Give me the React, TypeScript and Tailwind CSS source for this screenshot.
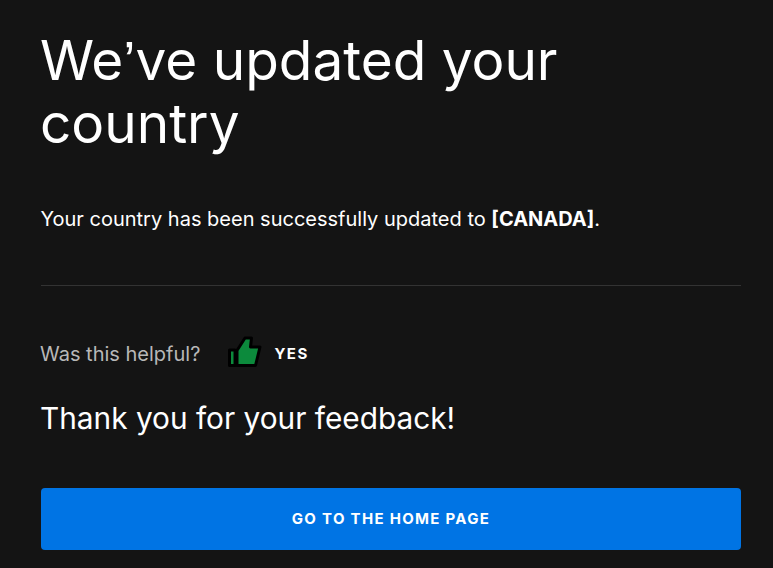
export default function App() {
  return (
    <main className="min-h-[568px] bg-[#141414] pl-[41px] pr-[32px] pt-[29px] text-white font-['Inter',sans-serif]">
      <h1 className="-ml-px text-[54.9px] leading-[62px] font-normal">
        <span className="block">
          We<span className="font-['Liberation_Sans',sans-serif]">’</span>ve updated your
        </span>
        <span className="block">country</span>
      </h1>
      <p className="-ml-[0.5px] mt-[50px] text-[20px] leading-[30px]">
        Your country has been successfully updated to <strong className="font-bold">[CANADA]</strong>.
      </p>
      <hr className="mt-[51px] border-[#333333]" />
      <div className="-ml-px mt-[52px] flex items-center h-[32px]">
        <span className="text-[20px] text-[#b8b8b8]">Was this helpful?</span>
        <svg className="ml-[27px] w-[34px] h-[32px] overflow-visible" viewBox="0 0 34 32">
          <path d="M2.5 12H8v15.5H2.5z" fill="#0c8a3c" stroke="#000" strokeWidth="3" strokeLinejoin="round" />
          <path d="M10 12.5L18 0h6.5l-1 9H33l-4.5 18.5H10z" fill="#0c8a3c" stroke="#000" strokeWidth="3" strokeLinejoin="round" />
        </svg>
        <span className="ml-[13px] text-[15px] font-bold tracking-[1.5px]">YES</span>
      </div>
      <p className="-ml-px mt-[28px] text-[29.8px] leading-[40px]">Thank you for your feedback!</p>
      <button className="mt-[50px] w-full h-[62px] rounded bg-[#0074e4] text-[15px] font-bold tracking-[1.3px]">
        GO TO THE HOME PAGE
      </button>
    </main>
  );
}
